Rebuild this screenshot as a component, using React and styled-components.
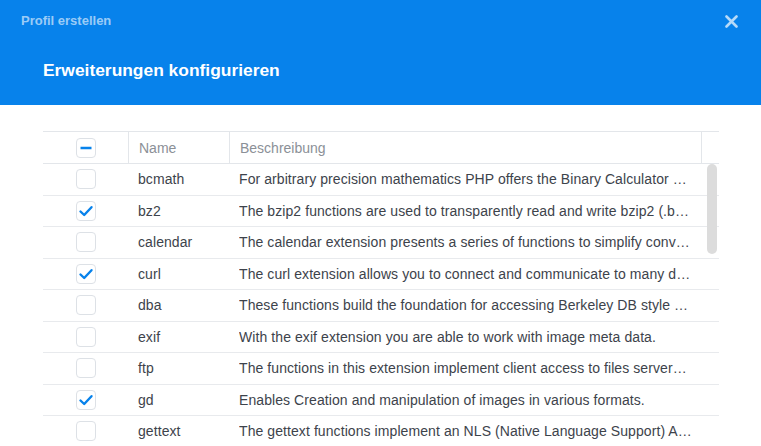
import React from 'react';
import styled, { createGlobalStyle } from 'styled-components';

const GlobalStyle = createGlobalStyle`
	html, body {
		margin: 0;
		padding: 0;
		background: #fff;
		font-family: "Liberation Sans", Arial, sans-serif;
		overflow: hidden;
	}
`;

const Modal = styled.div`
	width: 761px;
	height: 446px;
	background: #fff;
	overflow: hidden;
`;

const Header = styled.header`
	position: relative;
	height: 105px;
	box-sizing: border-box;
	background: #0782eb;
	padding: 13px 21px 0;
`;

const Caption = styled.div`
	font-size: 13px;
	font-weight: bold;
	line-height: 16px;
	color: rgba(255, 255, 255, 0.6);
`;

const Title = styled.h1`
	margin: 30px 0 0 22px;
	font-size: 17.4px;
	line-height: 22px;
	font-weight: bold;
	color: #fff;
`;

const Close = styled.button`
	position: absolute;
	top: 14px;
	right: 22px;
	width: 15px;
	height: 15px;
	padding: 0;
	border: 0;
	background: none;
	display: flex;
	align-items: center;
	justify-content: center;
	cursor: pointer;
`;

const Body = styled.section`
	padding: 26px 42px 0 43px;
`;

const Table = styled.div`
	position: relative;
	border-top: 1px solid #e3e6ea;
`;

const cols = '85px 101px 472px 1fr';

const HeadRow = styled.div`
	display: grid;
	grid-template-columns: ${cols};
	height: 31px;
	border-bottom: 1px solid #e3e6ea;
`;

const HeadCell = styled.div`
	display: flex;
	align-items: center;
	justify-content: ${(p) => (p.$center ? 'center' : 'flex-start')};
	padding: 0 10px;
	font-size: 14px;
	color: #8b9097;
	border-left: ${(p) => (p.$first ? 'none' : '1px solid #e3e6ea')};
	box-sizing: border-box;
`;

const Row = styled.div`
	display: grid;
	grid-template-columns: ${cols};
	height: 31.5px;
	box-sizing: border-box;
	border-bottom: 1px solid #e8eaed;
`;

const Cell = styled.div`
	display: flex;
	align-items: center;
	justify-content: ${(p) => (p.$center ? 'center' : 'flex-start')};
	padding: 0 ${(p) => (p.$tight ? '9px' : '10px')} 0 10px;
	min-width: 0;
	font-size: 14px;
	letter-spacing: 0.08px;
	color: #3d434b;
	box-sizing: border-box;
`;

const Ellipsis = styled.span`
	white-space: nowrap;
	overflow: hidden;
	text-overflow: ellipsis;
	min-width: 0;
`;

const Box = styled.span`
	width: 20px;
	height: 20px;
	box-sizing: border-box;
	border: 1px solid #dde1e6;
	border-radius: 4px;
	background: #fff;
	display: flex;
	align-items: center;
	justify-content: center;
`;

const Thumb = styled.div`
	position: absolute;
	top: 32px;
	right: 2px;
	width: 10px;
	height: 90px;
	border-radius: 5px;
	background: #dcdcdc;
`;

const extensions = [
	{ name: 'bcmath', on: false, desc: 'For arbitrary precision mathematics PHP offers the Binary Calculator which supports numbers of any size and precision.' },
	{ name: 'bz2', on: true, desc: 'The bzip2 functions are used to transparently read and write bzip2 (.bz2) compressed files.' },
	{ name: 'calendar', on: false, desc: 'The calendar extension presents a series of functions to simplify converting between different calendar formats.' },
	{ name: 'curl', on: true, desc: 'The curl extension allows you to connect and communicate to many different types of servers with many different types of protocols.' },
	{ name: 'dba', on: false, desc: 'These functions build the foundation for accessing Berkeley DB style databases.' },
	{ name: 'exif', on: false, desc: 'With the exif extension you are able to work with image meta data.' },
	{ name: 'ftp', on: false, desc: 'The functions in this extension implement client access to files servers speaking the File Transfer Protocol (FTP).' },
	{ name: 'gd', on: true, desc: 'Enables Creation and manipulation of images in various formats.' },
	{ name: 'gettext', on: false, desc: 'The gettext functions implement an NLS (Native Language Support) API which can be used to internationalize your PHP applications.' },
];

function Checkbox({ state }) {
	return (
		<Box>
			{state === 'on' && (
				<svg width="16" height="16" viewBox="0 0 16 16">
					<polyline points="2.5,8.5 6.2,12 13.5,4.2" fill="none" stroke="#0782eb" strokeWidth="2.4" strokeLinecap="round" strokeLinejoin="round" />
				</svg>
			)}
			{state === 'some' && (
				<svg width="16" height="16" viewBox="0 0 16 16">
					<line x1="2.5" y1="8" x2="13.5" y2="8" stroke="#0782eb" strokeWidth="2.5" />
				</svg>
			)}
		</Box>
	);
}

export default function App() {
	return (
		<Modal>
			<GlobalStyle />
			<Header>
				<Caption>Profil erstellen</Caption>
				<Title>Erweiterungen konfigurieren</Title>
				<Close aria-label="Schließen">
					<svg width="13" height="13" viewBox="0 0 13 13">
						<path d="M1.5 1.5 L11.5 11.5 M11.5 1.5 L1.5 11.5" stroke="rgba(255,255,255,0.7)" strokeWidth="2.6" strokeLinecap="round" />
					</svg>
				</Close>
			</Header>
			<Body>
				<Table>
					<HeadRow>
						<HeadCell $first $center><Checkbox state="some" /></HeadCell>
						<HeadCell>Name</HeadCell>
						<HeadCell>Beschreibung</HeadCell>
						<HeadCell />
					</HeadRow>
					{extensions.map((ext) => (
						<Row key={ext.name}>
							<Cell $center><Checkbox state={ext.on ? 'on' : 'off'} /></Cell>
							<Cell>{ext.name}</Cell>
							<Cell $tight><Ellipsis>{ext.desc}</Ellipsis></Cell>
							<Cell />
						</Row>
					))}
					<Thumb />
				</Table>
			</Body>
		</Modal>
	);
}
